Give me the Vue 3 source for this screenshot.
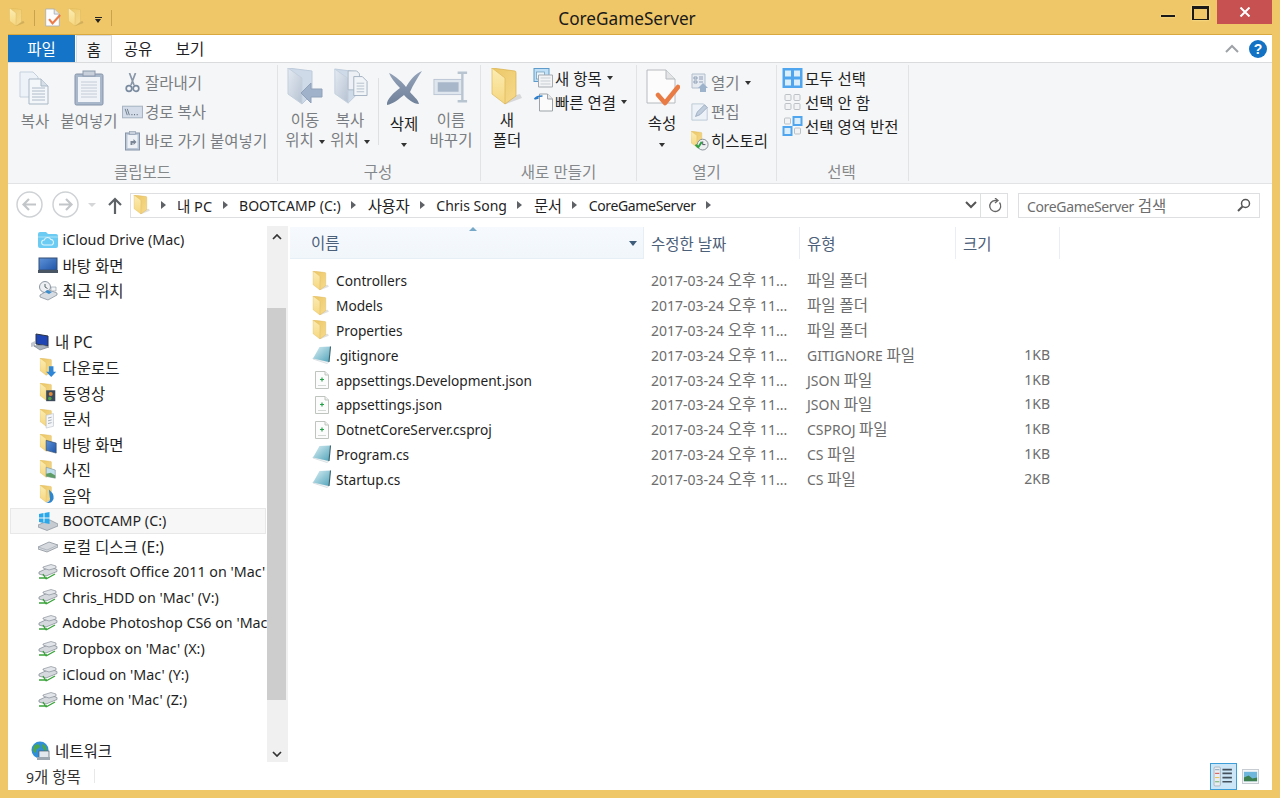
<script setup>
const crumbs = [
  { t: '내 PC', c: 'pc15' },
  { t: 'BOOTCAMP (C:)', c: '' },
  { t: '사용자', c: 'ko tk' },
  { t: 'Chris Song', c: '' },
  { t: '문서', c: 'ko tk' },
  { t: 'CoreGameServer', c: 'tight' }
]
const navItems = [
  { t: 'iCloud Drive (Mac)', i: 'cloudf', k: 'sub' },
  { t: '바탕 화면', i: 'desk', k: 'sub', ko: true },
  { t: '최근 위치', i: 'recent', k: 'sub', ko: true },
  { k: 'gap' },
  { t: '내 PC', i: 'pc', k: 'top', ko: true },
  { t: '다운로드', i: 'f-down', k: 'sub', ko: true },
  { t: '동영상', i: 'f-video', k: 'sub', ko: true },
  { t: '문서', i: 'f-doc', k: 'sub', ko: true },
  { t: '바탕 화면', i: 'f-desk', k: 'sub', ko: true },
  { t: '사진', i: 'f-pic', k: 'sub', ko: true },
  { t: '음악', i: 'f-music', k: 'sub', ko: true },
  { t: 'BOOTCAMP (C:)', i: 'winhd', k: 'sub', sel: true },
  { t: '로컬 디스크 (E:)', i: 'hd', k: 'sub', ko: true },
  { t: "Microsoft Office 2011 on 'Mac'", i: 'net', k: 'sub' },
  { t: "Chris_HDD on 'Mac' (V:)", i: 'net', k: 'sub' },
  { t: "Adobe Photoshop CS6 on 'Mac' (W:)", i: 'net', k: 'sub' },
  { t: "Dropbox on 'Mac' (X:)", i: 'net', k: 'sub' },
  { t: "iCloud on 'Mac' (Y:)", i: 'net', k: 'sub' },
  { t: "Home on 'Mac' (Z:)", i: 'net', k: 'sub' },
  { k: 'gap' },
  { t: '네트워크', i: 'globe', k: 'top', ko: true }
]
const files = [
  { n: 'Controllers', i: 'folder', p: '', y: '파일 폴더', s: '' },
  { n: 'Models', i: 'folder', p: '', y: '파일 폴더', s: '' },
  { n: 'Properties', i: 'folder', p: '', y: '파일 폴더', s: '' },
  { n: '.gitignore', i: 'sheet', p: 'GITIGNORE ', y: '파일', s: '1KB' },
  { n: 'appsettings.Development.json', i: 'json', p: 'JSON ', y: '파일', s: '1KB' },
  { n: 'appsettings.json', i: 'json', p: 'JSON ', y: '파일', s: '1KB' },
  { n: 'DotnetCoreServer.csproj', i: 'json', p: 'CSPROJ ', y: '파일', s: '1KB' },
  { n: 'Program.cs', i: 'sheet', p: 'CS ', y: '파일', s: '1KB' },
  { n: 'Startup.cs', i: 'sheet', p: 'CS ', y: '파일', s: '2KB' }
]
</script>

<template>
  <div class="frame">
    <svg class="defs" aria-hidden="true">
      <defs>
        <linearGradient id="gFlap" x1="0" y1="0" x2="0" y2="1"><stop offset="0" stop-color="#FCEDB4"/><stop offset="1" stop-color="#F5D67E"/></linearGradient>
        <linearGradient id="gBack" x1="0" y1="0" x2="1" y2="1"><stop offset="0" stop-color="#EBC665"/><stop offset="1" stop-color="#F6DA8C"/></linearGradient>
        <linearGradient id="gTeal" x1="0" y1="0" x2="1" y2="1"><stop offset="0" stop-color="#DCF0F4"/><stop offset="1" stop-color="#4FA3BA"/></linearGradient>
        <linearGradient id="gGrey" x1="0" y1="0" x2="1" y2="1"><stop offset="0" stop-color="#E4EAF2"/><stop offset="1" stop-color="#B6C2D2"/></linearGradient>
        <linearGradient id="gDesk" x1="0" y1="0" x2="1" y2="1"><stop offset="0" stop-color="#5E92D8"/><stop offset="1" stop-color="#1F55A8"/></linearGradient>
        <linearGradient id="gDel" x1="0" y1="0" x2="0" y2="1"><stop offset="0" stop-color="#95A4BA"/><stop offset="1" stop-color="#6F8099"/></linearGradient>
        <symbol id="folder" viewBox="0 0 30 38">
          <path d="M13 30 L28 26 L30 30 L14 36Z" fill="#000" opacity=".12"/>
          <path d="M0 0 L23 3 Q24 3 24 5 V28 L13 36 Z" fill="url(#gBack)" stroke="#D9B04C" stroke-width=".7"/>
          <path d="M0 0 L13 10 V36 L0 26 Z" fill="url(#gFlap)" stroke="#DDB85A" stroke-width=".7"/>
        </symbol>
        <symbol id="f-down" viewBox="0 0 18 22"><use href="#folder" width="16" height="20"/><path d="M10 9h5v6h3l-5.500 6L7 15h3z" fill="#2F86D6"/></symbol>
        <symbol id="f-video" viewBox="0 0 18 22"><use href="#folder" width="16" height="20"/><rect x="7" y="8" width="10" height="12" fill="#3B4A5A"/><circle cx="12" cy="12" r="2.200" fill="#E08A3C"/><circle cx="11" cy="17" r="2" fill="#4E9E4A"/></symbol>
        <symbol id="f-doc" viewBox="0 0 18 22"><use href="#folder" width="16" height="20"/><path d="M7 7 L15 5 V19 L7 21Z" fill="#F4F6F8" stroke="#B5BDC6" stroke-width=".6"/><path d="M9 10l4-1M9 13l4-1M9 16l4-1" stroke="#8D99A6" stroke-width=".8"/></symbol>
        <symbol id="f-desk" viewBox="0 0 18 22"><use href="#folder" width="16" height="20"/><path d="M7 7 L18 10 V21 L7 18Z" fill="url(#gDesk)" stroke="#334A66" stroke-width=".7"/></symbol>
        <symbol id="f-pic" viewBox="0 0 18 22"><use href="#folder" width="16" height="20"/><path d="M7 8 L17 11 V20 L7 18Z" fill="#BFE0EE" stroke="#77858F" stroke-width=".6"/><path d="M7 15l5-1 5 3v3l-10-2z" fill="#5E9C66"/></symbol>
        <symbol id="f-music" viewBox="0 0 18 22"><use href="#folder" width="16" height="20"/><path d="M10 5 C13 8 16 10 15 15 C14 19 10 21 7 19 C10 19 12 17 11 14Z" fill="#2E86CF"/></symbol>
        <symbol id="cloudf" viewBox="0 0 20 18"><path d="M0 3 Q0 1 2 1H8L10 3H18Q20 3 20 5V15Q20 17 18 17H2Q0 17 0 15Z" fill="#6CCBF2"/><path d="M0 6H20" stroke="#A9E2F8"/><path d="M6 14a2.500 2.500 0 0 1 .3-5 3.500 3.500 0 0 1 6.500-.6A3 3 0 0 1 14 14Z" fill="none" stroke="#DDF4FD" stroke-width="1.100"/></symbol>
        <symbol id="desk" viewBox="0 0 20 18"><rect x="1" y="2" width="18" height="12" fill="url(#gDesk)" stroke="#344F75"/><rect x="0" y="14" width="20" height="3" fill="#4A5563"/></symbol>
        <symbol id="recent" viewBox="0 0 20 20"><circle cx="7" cy="6" r="5.500" fill="#EDEFF2" stroke="#8C97A3"/><path d="M7 3v3l2.500 1.500" stroke="#566" fill="none"/><path d="M2 14 L11 9 L19 12 L19 14 L10 19 L2 16Z" fill="#D7DDE3" stroke="#7C8792" stroke-width=".7"/><path d="M9 9l5 2-3 2-4-2z" fill="#3E8DCB"/><path d="M13 6h5v4h-5z" fill="#F3F5F7" stroke="#8C97A3" stroke-width=".6"/></symbol>
        <symbol id="pc" viewBox="0 0 20 18"><path d="M5 1 L17 3 V13 L5 11Z" fill="#1F46B4" stroke="#2A3344"/><path d="M0 10 L4 8 V13 L0 14Z" fill="#C2C8CF"/><path d="M3 13 L12 12 L18 14 L9 17Z" fill="#AAB2BB" stroke="#6E7782" stroke-width=".6"/></symbol>
        <symbol id="winhd" viewBox="0 0 20 20"><path d="M0 14 L12 9 L20 13 V15 L9 19.500 L0 16Z" fill="#C5CBD1" stroke="#7B848E" stroke-width=".6"/><path d="M1 3l4.500-1v4.500H1zM6.500 2l5-1v5.500h-5zM1 7.500h4.500V12L1 11zM6.500 7.500h5V13l-5-1z" fill="#28A8EA"/></symbol>
        <symbol id="hd" viewBox="0 0 20 14"><path d="M0 8 L11 3 L20 6 V8 L9 13 L0 10Z" fill="#D6DADF" stroke="#7E868F" stroke-width=".7"/><path d="M0 8 L9 11 L20 6" fill="none" stroke="#9AA2AB" stroke-width=".6"/></symbol>
        <symbol id="net" viewBox="0 0 20 16"><path d="M1 8 L12 3 L19 5.500 V7.500 L8 12 L1 10Z" fill="#D6DADF" stroke="#7A828C" stroke-width=".7"/><path d="M5 3 L13 0.500 L18 2 V4 L11 6 L5 4Z" fill="#E2E5E9" stroke="#7A828C" stroke-width=".6"/><path d="M1 14 H9 M5 10 L8 15 M8 15 L17 10" stroke="#3BA33B" stroke-width="1.400" fill="none"/></symbol>
        <symbol id="globe" viewBox="0 0 20 20"><circle cx="9" cy="9" r="8.500" fill="#2F8FD8"/><path d="M3 5 C6 2 9 3 9 6 C8 8 5 7 5 10 C6 13 3 12 2 9Z M11 3 C15 4 17 8 15 11 C13 9 11 7 11 3Z" fill="#4CA64C"/><rect x="8" y="10" width="10" height="7" fill="#E3E8EE" stroke="#4E5C6B" stroke-width=".7"/><rect x="6" y="16" width="13" height="3" fill="#9EA8B2"/></symbol>
        <symbol id="sheet" viewBox="0 0 20 18"><path d="M1 13 L15 17.500 L17 16 L1 12Z" fill="#F4F7F8" stroke="#C5CFD4" stroke-width=".6"/><path d="M7.500 1 L18.500 .5 L17 16 L1 12.500Z" fill="url(#gTeal)"/><path d="M18.500 .5 L17 16" stroke="#3A5F6B" stroke-width="1.100"/></symbol>
        <symbol id="json" viewBox="0 0 16 18"><path d="M1.500 .5H11L14.500 4V17.500H1.500Z" fill="#FBFCFB" stroke="#BFC4BF"/><path d="M11 .5V4H14.500" fill="#EDEFED" stroke="#BFC4BF"/><path d="M4 14.500H12" stroke="#D5D9D5"/><path d="M8 6.500v4M6 8.500h4" stroke="#27A24A" stroke-width="1.200"/></symbol>
        <symbol id="sheetqat" viewBox="0 0 20 22"><path d="M2 1H12L18 7V21H2Z" fill="#FDFDFD" stroke="#A9AEB3"/><path d="M12 1V7H18" fill="#E6E8EA" stroke="#A9AEB3"/><path d="M6 13 L10 18 L19 8" fill="none" stroke="#EC7B47" stroke-width="2.500"/></symbol>
        <symbol id="bigdoc" viewBox="0 0 36 38"><path d="M3 2H22L31 11V35H3Z" fill="#FCFCFC" stroke="#B6BABE"/><path d="M22 2V11H31" fill="#E2E4E6" stroke="#B6BABE"/><path d="M14 27 L21 35 L34 19" fill="none" stroke="#E97B45" stroke-width="4.500" stroke-linecap="round" stroke-linejoin="round"/></symbol>
        <symbol id="copy" viewBox="-2 -3 36 38"><path d="M1 1H14L19 6V26H1Z" fill="#EDF2F8" stroke="#C5D0DC"/><path d="M10 8H22L29 15V33H10Z" fill="#F4F7FA" stroke="#A9B7C6"/><path d="M22 8V15H29" fill="#D6DEE7" stroke="#A9B7C6"/><path d="M13 17h13M13 20h13M13 23h13M13 26h13M13 29h13" stroke="#AEBAC8"/></symbol>
        <symbol id="paste" viewBox="-3 -2 36 38"><rect x="1" y="4" width="28" height="31" rx="1.500" fill="#A9B7CB" stroke="#8695AA"/><rect x="4" y="7" width="22" height="25" fill="#F0F3F7"/><path d="M7 12h16M7 15h16M7 18h16M7 21h16M7 24h16M7 27h16" stroke="#C3CCD8"/><rect x="9" y="1" width="12" height="5" fill="#C8D0DB" stroke="#8C99AC"/></symbol>
        <symbol id="cut" viewBox="0 0 16 20"><path d="M5 0 L9.500 12 M11 0 L6.500 12" stroke="#8A97A8" stroke-width="1.700"/><circle cx="4.500" cy="15.500" r="2.800" fill="none" stroke="#7B8BA0" stroke-width="1.700"/><circle cx="11.500" cy="15.500" r="2.800" fill="none" stroke="#7B8BA0" stroke-width="1.700"/></symbol>
        <symbol id="path" viewBox="0 0 20 14"><rect x=".5" y="1.500" width="19" height="11" fill="#D3DCE8" stroke="#A7B4C4"/><path d="M3 4l2 6M5 4l2 6" stroke="#5E6C7C" stroke-width=".8"/><path d="M9 9.500h.9M11.500 9.500h.9M14 9.500h.9" stroke="#5E6C7C"/></symbol>
        <symbol id="pastesm" viewBox="0 0 16 20"><rect x="1" y="2" width="14" height="17" fill="#BBC7D6" stroke="#8695AA"/><rect x="3" y="4" width="10" height="13" fill="#EEF2F6"/><rect x="5" y=".5" width="6" height="3" fill="#C8D0DB" stroke="#8C99AC" stroke-width=".6"/><path d="M6 14 V10 H9 V8 L12 11 L9 14 V12 H8 V14Z" fill="#7A8696"/></symbol>
        <symbol id="move" viewBox="-1 0 36 38"><path d="M0 0 L24 3 V26 L14 36Z" fill="#CFDAE8" stroke="#BCCADB"/><path d="M0 0 L14 10 V36 L0 26Z" fill="url(#gGrey)" stroke="#C4CFDD"/><path d="M13 25 L23 15 V21 H34 V29 H23 V35Z" fill="#9FB2C9" stroke="#8FA2B9"/></symbol>
        <symbol id="copyto" viewBox="-3 0 38 38"><path d="M0 0 L24 3 V26 L14 36Z" fill="#CFDAE8" stroke="#BCCADB"/><path d="M0 0 L14 10 V36 L0 26Z" fill="url(#gGrey)" stroke="#C4CFDD"/><path d="M14 2H23L26 5V22H14Z" fill="#EDF1F6" stroke="#A9B7C6"/><path d="M20 8H29L34 13V28H20Z" fill="#F2F5F8" stroke="#A3B1C1"/><path d="M23 15h8M23 18h8M23 21h8M23 24h8" stroke="#B3BECB"/></symbol>
        <symbol id="del" viewBox="0 0 36 38"><path d="M3 5 C10 8 17 15 20 19 C24 12 29 6 36 3 C32 9 27 17 24 24 C27 28 32 31 33 36 C28 36 21 31 18 27 C13 31 7 36 1 37 C0 32 8 24 14 20 C9 15 5 10 3 5Z" fill="url(#gDel)"/></symbol>
        <symbol id="rename" viewBox="0 0 38 32"><rect x="1" y="8" width="30" height="16" fill="#E0E6EE" stroke="#BAC6D4"/><rect x="5" y="11" width="22" height="10" fill="#A9B7CA"/><path d="M26 1h10M26 31h10M31 1V31" stroke="#B9C4D1" stroke-width="2.500" fill="none"/></symbol>
        <symbol id="newitem" viewBox="0 0 20 20"><rect x=".5" y=".5" width="15" height="13" fill="#BEDFF5" stroke="#5E9BCB"/><rect x="3" y="4" width="8" height="7" fill="#EAF4FB" stroke="#6F97B5" stroke-width=".7"/><path d="M5 7h14v12H5z" fill="#F3F4F6" stroke="#A5ABB1"/><path d="M7 10h10M7 13h10M7 16h10" stroke="#C9CED3"/></symbol>
        <symbol id="easy" viewBox="0 0 20 20"><path d="M6 2H14L19 7V19H6Z" fill="#FBFBFB" stroke="#9DA3A9"/><path d="M14 2V7H19" fill="#E5E7E9" stroke="#9DA3A9"/><path d="M1 7 C3 4 6 4 9 4 M1 7 L5 6" stroke="#2E7FCB" stroke-width="1.600" fill="none"/></symbol>
        <symbol id="open" viewBox="0 0 18 20"><path d="M1 1H14V15H1Z" fill="#E6EBF2" stroke="#B2BECC"/><path d="M3 4h3v2H3zM3 8h3v2H3zM8 4h4M8 6h4M8 9h4" stroke="#8FA0B4" fill="none"/><path d="M7 15 L12 10 L17 15 H15 V19 H9 V15Z" fill="#9DB2CB"/></symbol>
        <symbol id="edit" viewBox="0 0 20 20"><path d="M1 1H14L18 5V19H1Z" fill="#EDF2F8" stroke="#BAC6D4"/><path d="M5 15 L7 10 L15 2 L18 5 L10 13Z" fill="#C0CDDD" stroke="#8EA0B6" stroke-width=".8"/></symbol>
        <symbol id="hist" viewBox="0 0 20 22"><use href="#folder" width="15" height="19"/><circle cx="13" cy="15" r="6" fill="#EEF0F2" stroke="#7E8890"/><path d="M13 11.500V15H16" stroke="#445" fill="none"/><path d="M5 15 L8 18 L12 12" stroke="#2EA043" stroke-width="2.200" fill="none"/></symbol>
        <symbol id="selall" viewBox="0 0 20 20"><rect width="20" height="20" fill="#4FA6EE"/><rect x="2.500" y="2.500" width="6" height="6" fill="#DCEEFC"/><rect x="11.500" y="2.500" width="6" height="6" fill="#DCEEFC"/><rect x="2.500" y="11.500" width="6" height="6" fill="#DCEEFC"/><rect x="11.500" y="11.500" width="6" height="6" fill="#DCEEFC"/></symbol>
        <symbol id="selnone" viewBox="0 0 20 20"><g fill="#F2F3F4" stroke="#BDC1C5"><rect x="2.500" y="2.500" width="6" height="6" rx="1"/><rect x="11.500" y="2.500" width="6" height="6" rx="1"/><rect x="2.500" y="11.500" width="6" height="6" rx="1"/><rect x="11.500" y="11.500" width="6" height="6" rx="1"/></g></symbol>
        <symbol id="selinv" viewBox="0 0 20 20"><g fill="#F2F3F4" stroke="#BDC1C5"><rect x="2" y="2" width="6" height="6" rx="1"/><rect x="12" y="12" width="6" height="6" rx="1"/></g><rect x="10" y="0" width="10" height="10" fill="#4FA6EE"/><rect x="12" y="2" width="6" height="6" fill="#DCEEFC"/><rect x="0" y="10" width="10" height="10" fill="#4FA6EE"/><rect x="2" y="12" width="6" height="6" fill="#DCEEFC"/></symbol>
        <symbol id="details" viewBox="0 0 20 20"><rect x="1" y="1" width="6" height="18" rx="1" fill="#E9EEF2" stroke="#9BA5AE" stroke-width=".7"/><path d="M2 3.500h4" stroke="#8FA6BD"/><path d="M2 7h4" stroke="#D9534F"/><path d="M2 11h4" stroke="#E8C25A"/><path d="M2 15h4" stroke="#70B06C"/><path d="M9 3.500h9M9 7h9M9 11h9M9 15h9" stroke="#44505C" stroke-width="1.600"/></symbol>
        <symbol id="thumbs" viewBox="0 0 18 16"><rect x=".5" y=".5" width="17" height="15" fill="#F5F6F7" stroke="#C3C9CF"/><rect x="2" y="3" width="14" height="10" fill="#6FB6DC"/><path d="M2 9l5-2 4 3 5-1v4H2z" fill="#3D7F4F"/></symbol>
      </defs>
    </svg>

    <header class="titlebar">
      <div class="qat">
        <svg class="qi1"><use href="#folder"/></svg>
        <i class="qsep"></i>
        <svg class="qi2"><use href="#sheetqat"/></svg>
        <svg class="qi3"><use href="#folder"/></svg>
        <span class="qdrop"></span>
        <i class="qsep q2"></i>
      </div>
      <div class="title">CoreGameServer</div>
      <div class="winctl">
        <span class="wmin"></span>
        <span class="wmax"></span>
        <span class="wclose">
          <svg width="12" height="10" viewBox="0 0 12 10"><path d="M1.500 .5 L10.500 9.500 M10.500 .5 L1.500 9.500" stroke="#fff" stroke-width="2"/></svg>
        </span>
      </div>
    </header>

    <main class="window">
      <nav class="tabs">
        <span class="tab file">파일</span>
        <span class="tab home">홈</span>
        <span class="tab share">공유</span>
        <span class="tab view">보기</span>
        <span class="tabs-right">
          <svg width="14" height="9" viewBox="0 0 14 9"><path d="M1 8 L7 2 L13 8" fill="none" stroke="#9EA2A6" stroke-width="2"/></svg>
          <svg width="18" height="18" viewBox="0 0 18 18"><circle cx="9" cy="9" r="9" fill="#1372C4"/><text x="9" y="14" text-anchor="middle" font-size="14" font-weight="700" fill="#fff" font-family="Liberation Sans, sans-serif">?</text></svg>
        </span>
      </nav>

      <section class="ribbon">
        <div class="group g1">
          <div class="gbody">
            <div class="big w54 off"><svg class="bi"><use href="#copy"/></svg><span class="down2">복사</span></div>
            <div class="big w54 off"><svg class="bi"><use href="#paste"/></svg><span class="down2">붙여넣기</span></div>
            <div class="col ml6 off">
              <div class="sm s29"><svg class="si"><use href="#cut"/></svg>잘라내기</div>
              <div class="sm s29"><svg class="si"><use href="#path"/></svg>경로 복사</div>
              <div class="sm s29"><svg class="si"><use href="#pastesm"/></svg>바로 가기 붙여넣기</div>
            </div>
          </div>
          <div class="glabel">클립보드</div>
        </div>

        <div class="group g2">
          <div class="gbody">
            <div class="big w44 off"><svg class="bi"><use href="#move"/></svg><span class="down1">이동</span><span>위치<b class="caret"></b></span></div>
            <div class="big w46 off"><svg class="bi"><use href="#copyto"/></svg><span class="down1">복사</span><span>위치<b class="caret"></b></span></div>
            <i class="vline"></i>
            <div class="big w50"><svg class="bi"><use href="#del"/></svg><span class="down5">삭제</span><b class="caret solo"></b></div>
            <div class="big w44 off"><svg class="bi"><use href="#rename"/></svg><span class="down1">이름</span><span>바꾸기</span></div>
          </div>
          <div class="glabel shift">구성</div>
        </div>

        <div class="group g3">
          <div class="gbody">
            <div class="big w52"><svg class="bi"><use href="#folder"/></svg><span class="down1">새</span><span>폴더</span></div>
            <div class="col">
              <div class="sm s24 tight2"><svg class="si"><use href="#newitem"/></svg>새 항목<b class="caret"></b></div>
              <div class="sm s24 tight2"><svg class="si"><use href="#easy"/></svg>빠른 연결<b class="caret"></b></div>
            </div>
          </div>
          <div class="glabel">새로 만들기</div>
        </div>

        <div class="group g4">
          <div class="gbody">
            <div class="big w50"><svg class="bi"><use href="#bigdoc"/></svg><span class="down4">속성</span><b class="caret solo1"></b></div>
            <div class="col ml4">
              <div class="sm s29 n18 off"><svg class="si"><use href="#open"/></svg>열기<b class="caret"></b></div>
              <div class="sm s29 n18 off"><svg class="si"><use href="#edit"/></svg>편집</div>
              <div class="sm s29 n18"><svg class="si"><use href="#hist"/></svg>히스토리</div>
            </div>
          </div>
          <div class="glabel">열기</div>
        </div>

        <div class="group g5">
          <div class="gbody">
            <div class="col">
              <div class="sm s24"><svg class="si"><use href="#selall"/></svg>모두 선택</div>
              <div class="sm s24"><svg class="si"><use href="#selnone"/></svg>선택 안 함</div>
              <div class="sm s24"><svg class="si"><use href="#selinv"/></svg>선택 영역 반전</div>
            </div>
          </div>
          <div class="glabel shift">선택</div>
        </div>
      </section>

      <section class="toolbar">
        <svg class="circ" width="27" height="27" viewBox="0 0 27 27"><circle cx="13.500" cy="13.500" r="12.500" fill="#fff" stroke="#CFD2D5" stroke-width="1.500"/><path d="M20 13.500H8 M13 8 L7.500 13.500 L13 19" fill="none" stroke="#C3C6C9" stroke-width="2.200"/></svg>
        <svg class="circ c2" width="27" height="27" viewBox="0 0 27 27"><circle cx="13.500" cy="13.500" r="12.500" fill="#fff" stroke="#CFD2D5" stroke-width="1.500"/><path d="M7 13.500H19 M14 8 L19.500 13.500 L14 19" fill="none" stroke="#C3C6C9" stroke-width="2.200"/></svg>
        <b class="tdrop"></b>
        <svg class="up" width="14" height="17" viewBox="0 0 14 17"><path d="M7 17V2 M1 8 L7 2 L13 8" fill="none" stroke="#5E6266" stroke-width="2.200"/></svg>
        <div class="address">
          <svg class="afold"><use href="#folder"/></svg>
          <template v-for="c in crumbs" :key="c.t">
            <b class="arrow"></b><span class="crumb" :class="c.c">{{ c.t }}</span>
          </template>
          <b class="arrow"></b>
          <span class="aright">
            <svg width="12" height="8" viewBox="0 0 12 8"><path d="M1 1 L6 6 L11 1" fill="none" stroke="#555" stroke-width="2"/></svg>
            <i class="adiv"></i>
            <svg width="14" height="15" viewBox="0 0 14 15"><path d="M11.500 4.500 A5.500 5.500 0 1 1 7 2.500 H9" fill="none" stroke="#666" stroke-width="1.300"/><path d="M7 0 L10 2.500 L7 5" fill="none" stroke="#666" stroke-width="1.300"/></svg>
          </span>
        </div>
        <div class="search">
          <span><span class="tight">CoreGameServer</span> <span class="ko">검색</span></span>
          <svg width="14" height="14" viewBox="0 0 14 14"><circle cx="8.500" cy="5.500" r="4" fill="none" stroke="#555" stroke-width="1.500"/><path d="M5.500 8.500 L1 13" stroke="#555" stroke-width="2"/></svg>
        </div>
      </section>

      <section class="main">
        <aside class="navpane">
          <div v-for="(n, idx) in navItems" :key="idx" class="nrow" :class="[n.k, { sel: n.sel, ko: n.ko }]">
            <template v-if="n.t">
              <svg class="ni"><use :href="'#' + n.i"/></svg>
              <span>{{ n.t }}</span>
            </template>
          </div>
        </aside>
        <div class="scroll">
          <svg class="sa" width="10" height="6" viewBox="0 0 10 6"><path d="M1 5 L5 1 L9 5" fill="none" stroke="#333" stroke-width="1.700"/></svg>
          <div class="thumb"></div>
          <svg class="sa sb" width="10" height="6" viewBox="0 0 10 6"><path d="M1 1 L5 5 L9 1" fill="none" stroke="#333" stroke-width="1.700"/></svg>
        </div>
        <div class="list">
          <div class="lhead">
            <div class="hc hn">이름<b class="sortup"></b><b class="hdrop"></b></div>
            <div class="hc">수정한 날짜</div>
            <div class="hc">유형</div>
            <div class="hc">크기</div>
          </div>
          <div class="rows">
            <div v-for="f in files" :key="f.n" class="lrow">
              <div class="cn"><svg class="fi" :class="f.i"><use :href="'#' + f.i"/></svg>{{ f.n }}</div>
              <div class="cd">2017-03-24 <span class="ko">오후</span> 11...</div>
              <div class="cd">{{ f.p }}<span class="ko">{{ f.y }}</span></div>
              <div class="cd cs">{{ f.s }}</div>
            </div>
          </div>
        </div>
      </section>

      <footer class="status">
        <span class="count">9<span class="ko">개 항목</span></span>
        <i class="stsep"></i>
        <span class="views">
          <span class="vsel"><svg width="21" height="21"><use href="#details"/></svg></span>
          <svg class="vthumb" width="17" height="15"><use href="#thumbs"/></svg>
        </span>
      </footer>
    </main>
  </div>
</template>

<style>
html, body { margin: 0; padding: 0; }
</style>

<style scoped>
.frame {
  --ff: "Noto Sans", "Noto Sans CJK KR", sans-serif;
  width: 1280px; height: 798px; box-sizing: border-box;
  background: #EFC768; padding: 0 8px 8px;
  display: flex; flex-direction: column;
  font-family: var(--ff); font-size: 14px; color: #1F1F1F; overflow: hidden;
}
.defs { position: absolute; width: 0; height: 0; }
.ko { font-size: 15.500px; }
.tk { letter-spacing: -0.400px; }
.pc15 { font-size: 14.500px; }
.tight { letter-spacing: -0.350px; }
.titlebar { height: 34px; display: flex; flex: none; }
.qat { display: flex; align-items: center; width: 104px; margin-top: 1px; }
.qi1 { width: 16px; height: 19px; margin-left: 1px; }
.qsep { width: 1px; height: 16px; background: #C9A24F; margin-left: 9px; }
.qi2 { width: 17px; height: 19px; margin-left: 9px; }
.qi3 { width: 16px; height: 19px; margin-left: 7px; }
.qdrop { width: 7px; height: 5px; margin-left: 11px; border-top: 1.500px solid #222; position: relative; margin-top: 3px; box-sizing: border-box; }
.qdrop::after { content: ""; position: absolute; left: 0; top: 1px; border: 3.500px solid transparent; border-top: 4px solid #222; border-bottom: 0; }
.q2 { margin-left: 9px; }
.title { flex: 1; text-align: center; font-size: 17.200px; line-height: 38px; padding-right: 18px; color: #1A1A1A; }
.winctl { display: flex; width: 112px; flex: none; align-items: flex-start; position: relative; }
.wmin { width: 14px; height: 2px; background: #1a1a1a; margin: 15px 0 0 1px; box-shadow: 0 0 2px #FFEFA8; }
.wmax { width: 13px; height: 10px; border: 2px solid #1a1a1a; border-top-width: 3px; border-bottom-width: 1px; margin: 6px 0 0 17px; box-shadow: 0 0 2px #FFEFA8; box-sizing: content-box; }
.wclose { width: 55px; height: 24px; background: #C75050; margin-left: 8px; display: flex; align-items: center; justify-content: center; }

.window { flex: 1; min-height: 0; background: #fff; border-top: 1px solid #D9A93F; display: flex; flex-direction: column; }
.tabs { height: 27px; border-bottom: 1px solid #DADBDC; display: flex; flex: none; align-items: stretch; background: #fff; }
.tab { display: flex; align-items: center; justify-content: center; font-size: 15.500px; }
.file { width: 67px; background: #1474C7; color: #fff; }
.home { width: 36px; margin-left: 1px; background: #F5F6F7; border: 1px solid #DADBDC; border-width: 1px 1px 0; height: 27px; box-sizing: border-box; }
.share { width: 50px; margin-left: 1px; }
.view { width: 54px; }
.tabs-right { margin-left: auto; display: flex; align-items: center; gap: 10px; padding-right: 5px; }

.ribbon { height: 116px; padding: 2px 0; background: #F5F6F7; border-bottom: 1px solid #E2E3E4; display: flex; flex: none; font-size: 15.500px; }
.group { display: flex; flex-direction: column; border-right: 1px solid #E2E3E4; box-sizing: border-box; }
.g1 { width: 270px; }
.g2 { width: 203px; padding-left: 5px; }
.g3 { width: 156px; }
.g4 { width: 140px; }
.g5 { width: 132px; padding-left: 5px; }
.gbody { flex: 1; display: flex; min-height: 0; }
.glabel { height: 20px; line-height: 22px; text-align: center; color: #85888B; flex: none; }
.shift { margin-left: -7px; }
.big { display: flex; flex-direction: column; align-items: center; padding-top: 3px; line-height: 21px; white-space: nowrap; flex: none; }
.big span { height: 21px; }
.bi { width: 36px; height: 38px; margin-bottom: 3px; flex: none; }
.w54 { width: 54px; } .w44 { width: 44px; } .w46 { width: 46px; } .w50 { width: 50px; } .w52 { width: 52px; }
.off { color: #797D81; }
.col { display: flex; flex-direction: column; flex: none; }
.ml6 { margin-left: 6px; } .ml4 { margin-left: 4px; }
.g1 .col, .g4 .col { margin-top: 3px; }
.g3 .col, .g5 .col { margin-top: 1px; }
.sm { display: flex; align-items: center; white-space: nowrap; }
.s29 { height: 29px; } .s24 { height: 24px; }
.si { width: 21px; height: 20px; margin-right: 2px; flex: none; }
.tight2 .si { margin-right: 1px; }
.n18 .si { width: 18px; height: 20px; }
.caret { display: inline-block; margin-left: 5px; vertical-align: middle; border: 3.500px solid transparent; border-top: 4px solid #333; border-bottom: 0; }
.solo { margin: 8px 0 0; }
.solo1 { margin: 9px 0 0; }
.big .down1 { position: relative; top: 0; margin-top: 1px; height: 20px; }
.big .down2 { margin-top: 2px; }
.big .down4 { margin-top: 4px; }
.big .down5 { margin-top: 5px; }
.vline { width: 1px; height: 67px; background: #DFE0E1; margin: 13px 0 0 5px; flex: none; }

.toolbar { height: 42px; display: flex; align-items: center; flex: none; padding: 0 12px 0 8px; box-sizing: border-box; }
.circ { flex: none; margin-top: -2px; }
.c2 { margin-left: 9px; }
.tdrop { border: 4px solid transparent; border-top: 4px solid #D4D6D8; border-bottom: 0; margin: 0 0 0 9px; }
.up { margin-left: 12px; flex: none; }
.address { margin-left: 8px; flex: 1; height: 25px; box-sizing: border-box; border: 1px solid #DDDFE1; display: flex; align-items: center; white-space: nowrap; }
.afold { width: 18px; height: 20px; margin-left: 2px; margin-right: -1px; flex: none; }
.arrow { border: 4px solid transparent; border-left: 5px solid #5E6266; border-right: 0; margin: 0 11.500px 0 10.500px; }
.aright { margin-left: auto; display: flex; align-items: center; height: 100%; }
.adiv { width: 1px; height: 100%; background: #DDDFE1; margin: 0 7px 0 3px; }
.aright svg:last-child { margin-right: 5px; }
.search { width: 242px; margin-left: 10px; height: 25px; box-sizing: border-box; border: 1px solid #DDDFE1; display: flex; align-items: center; justify-content: space-between; padding: 0 8px; color: #6D6D6D; flex: none; }

.main { flex: 1; min-height: 0; display: flex; }
.navpane { width: 259px; padding-top: 1px; overflow: hidden; flex: none; box-sizing: border-box; font-size: 14.300px; }
.nrow { height: 25.550px; display: flex; align-items: center; white-space: nowrap; box-sizing: border-box; }
.nrow.ko { font-size: 15.500px; }
.sub { padding-left: 30px; }
.top { padding-left: 23px; }
.ni { width: 20px; height: 20px; margin-right: 4.500px; flex: none; }
.top .ni { margin-right: 4px; }
.sel { background: #F7F7F7; border: 1px solid #E8E8E8; margin-left: 2px; padding-left: 27px; width: 256px; }
.scroll { width: 21px; background: #F0F0F0; position: relative; flex: none; }
.thumb { position: absolute; left: 0; top: 82px; width: 19px; height: 392px; background: #CDCDCD; }
.sa { position: absolute; left: 5px; top: 8px; }
.sb { top: auto; bottom: 5px; }
.list { margin-left: 2px; flex: 1; min-width: 0; padding-top: 1px; }
.lhead { display: grid; grid-template-columns: 354px 156px 156px 104px; height: 32px; font-size: 15.500px; }
.hc { display: flex; align-items: center; padding-left: 7px; color: #4C607A; border-right: 1px solid #E6EEF6; box-sizing: border-box; position: relative; }
.hn { padding-left: 21px; background: linear-gradient(#F6FAFE, #F1F6FB); border-bottom: 1px solid #E6EEF6; }
.sortup { position: absolute; left: 179px; top: 0; border: 4px solid transparent; border-bottom: 4px solid #78A8C8; border-top: 0; }
.hdrop { position: absolute; right: 6px; top: 14px; border: 4px solid transparent; border-top: 5px solid #3E5D7A; border-bottom: 0; }
.rows { margin-top: 9.500px; }
.lrow { display: grid; grid-template-columns: 354px 156px 156px 94px; height: 24.800px; align-items: center; }
.cn { display: flex; align-items: center; padding-left: 22px; white-space: nowrap; font-size: 13.700px; }
.fi { width: 24px; height: 20px; flex: none; }
.fi.folder { width: 18px; height: 20px; margin-right: 6px; }
.fi.sheet { width: 20px; height: 18px; margin-right: 4px; }
.fi.json { width: 16px; height: 18px; margin: 0 6px 0 2px; }
.cd { padding: 0.600px 0 0 7px; color: #6D6D6D; white-space: nowrap; height: 22px; line-height: 20px; box-sizing: border-box; }
.cs { text-align: right; padding: 0.600px 0 0; }

.status { height: 28px; flex: none; display: flex; align-items: center; padding-left: 18px; color: #333; }
.count { width: 68px; }
.stsep { width: 1px; height: 14px; background: #E8E8E8; }
.views { margin-left: auto; display: flex; align-items: center; padding-right: 13px; height: 100%; }
.vsel { width: 27px; height: 27px; box-sizing: border-box; background: #CDE6F7; border: 1px solid #3E9ED8; display: flex; align-items: center; justify-content: center; }
.vthumb { margin-left: 5px; }
</style>
